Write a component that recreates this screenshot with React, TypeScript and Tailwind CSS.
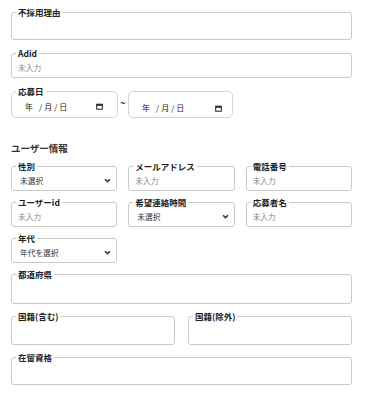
import React from "react";

const font = { fontFamily: '"Noto Sans CJK JP", "Noto Sans", sans-serif' };

function Legend({ children }: { children: React.ReactNode }) {
  return (
    <legend className="px-[2px] text-[8.5px] leading-[10px] font-bold text-[#222]">
      {children}
    </legend>
  );
}

function Field({
  label,
  h,
  children,
}: {
  label: string;
  h: string;
  children?: React.ReactNode;
}) {
  return (
    <fieldset className="border border-[#c9c9c9] rounded-[3px] px-[4px] min-w-0">
      <Legend>{label}</Legend>
      <div className={`${h} flex items-center pl-[2px]`}>{children}</div>
    </fieldset>
  );
}

function Placeholder({ text }: { text: string }) {
  return <span className="text-[7.7px] leading-none text-[#8a8a8a]">{text}</span>;
}

function Select({ text }: { text: string }) {
  return (
    <div className="flex items-center justify-between w-full pr-[1px]">
      <span className="pl-[2px] text-[7.7px] leading-none text-[#333]">{text}</span>
      <svg width="7" height="5" viewBox="0 0 7 5">
        <path d="M1 1.2 L3.5 3.6 L6 1.2" fill="none" stroke="#333" strokeWidth="1.5" />
      </svg>
    </div>
  );
}

function Calendar() {
  return (
    <svg width="7" height="7" viewBox="0 0 7 7">
      <rect x="0.7" y="1.2" width="5.6" height="5" fill="none" stroke="#222" strokeWidth="1" />
      <rect x="0.7" y="1.2" width="5.6" height="1.6" fill="#222" />
    </svg>
  );
}

function DateText() {
  return (
    <div className="flex items-center w-full pl-[13px] pr-[10px] justify-between">
      <div className="flex items-center text-[8px] leading-none text-[#222]">
        <span>年</span>
        <span className="ml-[6px]">/</span>
        <span className="ml-[2px]">月</span>
        <span className="ml-[2px]">/</span>
        <span className="ml-[2px]">日</span>
      </div>
      <Calendar />
    </div>
  );
}

export default function App() {
  return (
    <div className="w-[366px] h-[400px] bg-white overflow-hidden" style={font}>
      <div className="pl-[11px] pr-[14px] pt-[7px]">
        <Field label="不採用理由" h="h-[22px]" />
        <div className="mt-[8px]">
          <Field label="Adid" h="h-[19px]">
            <Placeholder text="未入力" />
          </Field>
        </div>
        <div className="mt-[8px] flex items-start">
          <fieldset className="w-[107px] border border-[#d4d4d4] rounded-[5px] px-[4px] min-w-0">
            <Legend>応募日</Legend>
            <div className="h-[21px] flex items-center">
              <div className="-ml-[4px] w-[calc(100%+8px)]">
                <DateText />
              </div>
            </div>
          </fieldset>
          <div className="w-[10px] pt-[12px] flex justify-center text-[9px] leading-none font-bold text-[#222]">
            ~
          </div>
          <div className="mt-[5px] w-[105px] h-[27px] border border-[#d4d4d4] rounded-[5px] flex items-center pt-[7px]">
            <DateText />
          </div>
        </div>

        <div className="mt-[25px] h-[10px] flex items-center text-[9.5px] font-semibold text-[#333]">
          ユーザー情報
        </div>

        <div className="mt-[8px] grid grid-cols-3 gap-x-[11px] gap-y-[6px]">
          <Field label="性別" h="h-[19px]">
            <Select text="未選択" />
          </Field>
          <Field label="メールアドレス" h="h-[19px]">
            <Placeholder text="未入力" />
          </Field>
          <Field label="電話番号" h="h-[19px]">
            <Placeholder text="未入力" />
          </Field>
          <Field label="ユーザーid" h="h-[19px]">
            <Placeholder text="未入力" />
          </Field>
          <Field label="希望連絡時間" h="h-[19px]">
            <Select text="未選択" />
          </Field>
          <Field label="応募者名" h="h-[19px]">
            <Placeholder text="未入力" />
          </Field>
          <Field label="年代" h="h-[19px]">
            <Select text="年代を選択" />
          </Field>
        </div>

        <div className="mt-[6px]">
          <Field label="都道府県" h="h-[24px]" />
        </div>
        <div className="mt-[7px] grid grid-cols-2 gap-x-[13px]">
          <Field label="国籍(含む)" h="h-[23px]" />
          <Field label="国籍(除外)" h="h-[23px]" />
        </div>
        <div className="mt-[7px]">
          <Field label="在留資格" h="h-[22px]" />
        </div>
      </div>
    </div>
  );
}
